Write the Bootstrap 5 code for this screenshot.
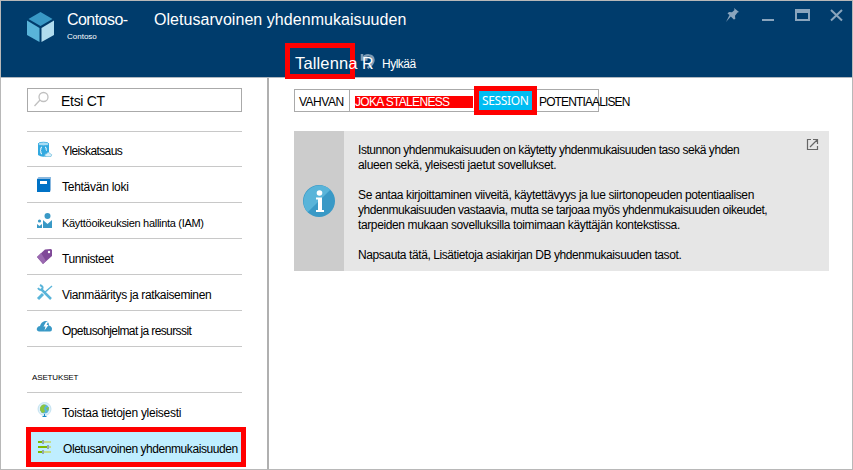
<!DOCTYPE html>
<html lang="fi">
<head>
<meta charset="utf-8">
<title>Oletusarvoinen yhdenmukaisuuden</title>
<link href="https://cdn.jsdelivr.net/npm/bootstrap@5.3.0/dist/css/bootstrap.min.css" rel="stylesheet">
<style>
body{font-family:"Liberation Sans",Arial,sans-serif;font-size:12px;line-height:15px;color:#000;background:#fff}
.blade{width:853px;height:470px;border:1px solid #b8b8b8;overflow:hidden}
.blade-head{height:77px;background:#003c6c;border-bottom:1px solid #b0b8c0;color:#fff}
.txt{white-space:nowrap;display:block}
.logo{margin:10px 0 0 25px}
.names{width:87px;margin:10px 0 0 12px}
.big{font-size:16px;line-height:18px}
.names .big{letter-spacing:-.55px}
.tiny{font-size:8px;line-height:10px;margin-top:3px}
.main-title{margin-top:10px;letter-spacing:.05px}
.cmds{margin:14px 0 0 131px;height:38px}
.hl{border:5px solid #f00}
.save{width:70px;height:36px;padding:6px 0 0 5px;font-size:16.5px;line-height:18px;letter-spacing:.15px}
.undo{position:relative;width:16px;height:22px;margin:9px 0 0 6px}
.undo svg{position:absolute;left:-1px;top:1px}
.undo span{position:absolute;left:1px;top:3px;font-size:16px;line-height:18px}
.drop{margin:14px 0 0 5px;letter-spacing:-.5px}
.wins{margin:6px 4px 0 0}
.side{width:268px;border-right:2px solid #b0b0b0;padding:10px 25px 0 26px}
.find{height:24px;border:1px solid #aaa;font-size:14px;letter-spacing:-.3px}
.find .txt{padding-top:5px}
.menu{margin-top:19px}
.item{height:36px;border-top:1px solid #c8c8c8;padding:9px 0 0 9px}
.item:first-child{height:35px}
.item svg{flex:none;width:18px;height:18px;margin-right:8px}
.item .txt{margin-top:4px}
.item:first-child .txt{margin-top:3px}
.sect{height:46px;border-top:1px solid #c8c8c8;font-size:8px;padding:23px 0 0 5px;letter-spacing:-.14px}
.picked{margin:-1px -4px 0 -1px;width:220px;height:40px;background:#bfeeff;padding:6px 0 0 5px}
.picked .txt{padding-top:4px}
.content-pane{padding:8px 23px 0 25px}
.seg{height:32px}
.cellx{height:23px;margin-top:3px;border:1px solid #aaa}
.c1{width:56px;padding:5px 0 0 4px;letter-spacing:-.5px}
.c2{width:124px;border-left:0;border-right:0;padding:6px 0 0 5px}
.c2 .txt{background:#f00;color:#fff;height:12px;line-height:13px;width:118px}
.c3{width:63px;height:29px;background:#00bcf2;color:#fff;font-family:"Noto Sans","Open Sans",sans-serif;padding:2px 0 0 3px;letter-spacing:-.35px}
.c4{width:62px;border-left:0;padding:5px 0 0 2px}
.info{height:140px;margin-top:13px;background:#e6e6e6}
.info-ic{width:50px;background:#ccc}
.info-tx{padding:12px 0 0 14px;flex:1}
.info-tx p{margin:0 0 15px}
.ext{margin:7px 10px 0 0}
.k23{letter-spacing:-.24px}.k26{letter-spacing:-.265px}.k34{letter-spacing:-.345px}.k36{letter-spacing:-.365px}.k38{letter-spacing:-.38px}
.k41{letter-spacing:-.41px}.k43{letter-spacing:-.435px}.k45{letter-spacing:-.452px}.k60{letter-spacing:-.6px}.k66{letter-spacing:-.67px}.k86{letter-spacing:-.87px}
.iam{font-size:11px;letter-spacing:-.3px}
</style>
</head>
<body>
<div class="blade d-flex flex-column">
<header class="blade-head d-flex align-items-start flex-shrink-0">
<svg class="logo" width="29" height="32" viewBox="0 0 29 32"><path fill="#3999c6" d="M14.500 1 26.500 8 14.500 15 2.500 8z"/><path fill="#59b4d9" d="M1 9.500 13.500 17V31L1 24z"/><path fill="#b0dcee" d="M28 9.500 15.500 17V31L28 24z"/></svg>
<div class="names"><span class="txt big">Contoso-</span><span class="txt tiny">Contoso</span></div>
<div class="flex-grow-1"><span class="txt big main-title">Oletusarvoinen yhdenmukaisuuden</span>
<div class="cmds d-flex align-items-start"><div class="save hl"><span class="txt">Tallenna</span></div>
<div class="undo"><svg width="16" height="17" viewBox="0 0 16 17" fill="none" stroke="#7d9cb6" stroke-width="2.500"><path d="M2 1v5.500h5.500M3 6C5 1 13 1 13.500 7c0 4-3 6-6 8"/></svg><span>R</span></div>
<span class="txt drop">Hylkää</span></div></div>
<svg class="wins" width="124" height="18" viewBox="0 0 124 18"><g fill="#8aa5bd"><path d="M10 1l5 4-1.500.6-2.500 3.200.3 3.200-1.500.5-3-3L2 15l3.500-7-2-1.500L5 5l3 .3L10.500 3z"/><path d="M38 12h12v2H38zM71 2h15v12H71zm2 4v6h11V6z" fill-rule="evenodd"/></g><path d="M107 3l11 10.500M118 3l-11 10.500" stroke="#8aa5bd" stroke-width="2"/></svg>
</header>
<div class="d-flex flex-grow-1">
<aside class="side flex-shrink-0">
<div class="find d-flex"><svg width="33" height="20" viewBox="0 0 33 20" fill="none" stroke="#c0c0c0" stroke-width="1.300"><circle cx="15.500" cy="8" r="4.500"/><path d="M12 11l-5.500 6"/></svg><span class="txt">Etsi CT</span></div>
<nav class="menu">
<div class="item d-flex"><svg viewBox="0 0 18 18"><path fill="#32a9e0" d="M2 3v11q4 3 9 1l2-2V3z"/><ellipse cx="7.500" cy="3" rx="5.500" ry="1.800" fill="#a9dcf4" stroke="#32a9e0" stroke-width=".8"/><path d="M6 6q-1.500 0-1.200 2.500Q4.500 9.500 4 9.500q.8 0 .8 1Q4.500 13 6 13M9 6q1.500 0 1.200 2.500 0 1 .8 1" fill="none" stroke="#fff"/><path fill="#d9effa" stroke="#59b4d9" stroke-width=".6" d="M9 15.500q-1-3 2-3 1-3 3 0 3 1 1 3z"/></svg><span class="txt k60">Yleiskatsaus</span></div>
<div class="item d-flex"><svg viewBox="0 0 18 18"><path fill="#0072c6" d="M1 3h13v13H1z"/><path fill="#8ab8df" d="M1 3 2.500 1H15v13l-1 2V3z"/><path fill="#fff" d="M4 5h7v3H4z"/></svg><span class="txt k26">Tehtävän loki</span></div>
<div class="item d-flex"><svg viewBox="0 0 18 18"><g fill="#3999c6"><circle cx="11.500" cy="4" r="3"/><circle cx="3.500" cy="9" r="1.600"/><path d="M7 8l4.500 4L16 8v8H7zM1 12l2.500 2L6 12v4H1z"/></g></svg><span class="txt iam">Käyttöoikeuksien hallinta (IAM)</span></div>
<div class="item d-flex"><svg viewBox="0 0 18 18"><path fill="#804998" d="M1 9 9 1.500 15 1l1 1v6l-9 8z"/><path fill="#9a69b0" d="M1 9l4-4 5 8-3 3z"/><circle cx="13" cy="4" r="1.200" fill="#fff"/></svg><span class="txt k41">Tunnisteet</span></div>
<div class="item d-flex"><svg viewBox="0 0 18 18" fill="none" stroke="#59b4d9"><path stroke-width="2.500" d="M5 5l10 10"/><path stroke-width="2" d="M2 4q2 3 4 1T4 1"/><path stroke-width="1.300" d="M16 2 8 9"/><path stroke-width="3" d="M7 10l-5 5"/></svg><span class="txt k36">Vianmääritys ja ratkaiseminen</span></div>
<div class="item d-flex"><svg viewBox="0 0 18 18"><path fill="#3999c6" d="M3 11.500Q0 10.500 1 8q1-2 3-2 1-4 5-5 4 0 4 4.500 3 1 3 3.500 0 2.500-2 2.500z"/><path d="M10 2 7.500 6.500h2l-1 4 4-5.500h-2l1.500-3z" fill="#fff"/></svg><span class="txt k60">Opetusohjelmat ja resurssit</span></div>
<div class="sect"><span class="txt">ASETUKSET</span></div>
<div class="item d-flex"><svg viewBox="0 0 18 18"><circle cx="8.500" cy="7" r="6.500" fill="#e0f1f9" stroke="#b8dced" stroke-width=".8"/><circle cx="8.500" cy="7" r="4.500" fill="#59b4d9"/><path fill="#8dc63f" d="M4 6q2-5 6-3L8 6l1 4-3 1-2-3zM10 6l3-1-1 4z"/><path d="M6.500 14.500h4M8.500 12v3" stroke="#1989c8"/></svg><span class="txt k26">Toistaa tietojen yleisesti</span></div>
<div class="picked hl d-flex"><svg class="flex-shrink-0" width="27" height="18" viewBox="-1 0 27 18"><path d="M1 4h4M1 9h9M1 14h4" stroke="#7fba00" stroke-width="2"/><path d="M7 4h7M12 9h2M7 14h7" stroke="#c5dc8a" stroke-width="2"/><path d="M6 2v4M11 7v4M6 12v4" stroke="#666"/></svg><span class="txt k43">Oletusarvoinen yhdenmukaisuuden</span></div>
</nav>
</aside>
<main class="content-pane flex-grow-1">
<div class="seg d-flex"><div class="cellx c1"><span class="txt">VAHVAN</span></div><div class="cellx c2"><span class="txt k66">JOKA STALENESS</span></div><div class="hl c3"><span class="txt">SESSION</span></div><div class="cellx c4"><span class="txt k86">POTENTIAALISEN</span></div></div>
<section class="info d-flex"><div class="info-ic d-flex align-items-center justify-content-center"><svg width="32" height="32" viewBox="0 0 32 32"><circle cx="16" cy="16" r="16" fill="#3999c6"/><path fill="#59b4d9" d="M4.700 27.300A16 16 0 0 1 27.300 4.700z"/><circle cx="16.500" cy="8" r="2.800" fill="#fff"/><path fill="#fff" d="M13 12.500h6V25h2v2h-8v-2h2V14.500h-2z"/></svg></div>
<div class="info-tx"><p><span class="txt k45">Istunnon yhdenmukaisuuden on käytetty yhdenmukaisuuden taso sekä yhden</span><span class="txt k34">alueen sekä, yleisesti jaetut sovellukset.</span></p><p><span class="txt k36">Se antaa kirjoittaminen viiveitä, käytettävyys ja lue siirtonopeuden potentiaalisen</span><span class="txt k43">yhdenmukaisuuden vastaavia, mutta se tarjoaa myös yhdenmukaisuuden oikeudet,</span><span class="txt k38">tarpeiden mukaan sovelluksilla toimimaan käyttäjän kontekstissa.</span></p><p><span class="txt k41">Napsauta tätä, Lisätietoja asiakirjan DB yhdenmukaisuuden tasot.</span></p></div>
<svg class="ext" width="13" height="13" viewBox="0 0 13 13" fill="none" stroke="#666" stroke-width="1.200"><path d="M5 1.500H1.500v10h10V8M4 9l7.500-7.500M7 1.500h4.500V6"/></svg></section>
</main>
</div>
</div>
<script src="https://cdn.jsdelivr.net/npm/bootstrap@5.3.0/dist/js/bootstrap.bundle.min.js"></script>
</body>
</html>
